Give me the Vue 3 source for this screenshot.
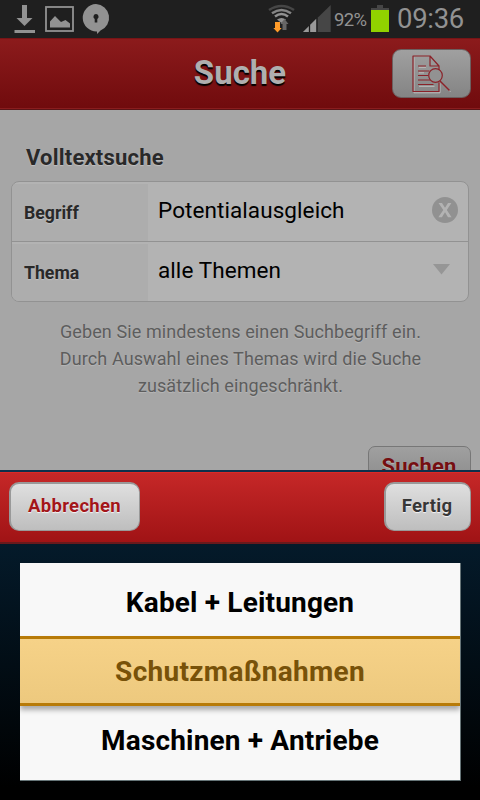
<script setup>
const hint = [
  'Geben Sie mindestens einen Suchbegriff ein.',
  'Durch Auswahl eines Themas wird die Suche',
  'zusätzlich eingeschränkt.',
]
const topics = ['Kabel + Leitungen', 'Schutzmaßnahmen', 'Maschinen + Antriebe']
</script>

<template>
  <div class="phone">
    <div class="status">
      <svg class="status-left" width="120" height="38" viewBox="0 0 120 38">
        <g fill="#929292">
          <path d="M22 5h5v13h5.500L24.500 26 16.500 18H22z" />
          <path d="M14.500 30h20.500v3H14.500z" />
          <path d="M50 27.500v-6l5-5.500 6 6 4.500-2 4.500 3.500v4z" />
          <path d="M96 4a13.700 13.700 0 0 1 4.500 26.400L97 34v-2.500a13.700 13.700 0 0 1-1-27.500z" />
        </g>
        <rect x="46" y="7" width="27" height="24" fill="none" stroke="#929292" stroke-width="1.800" />
        <path d="M96 14a2.700 2.700 0 0 1 1.300 5v3.500h-2.600V19A2.700 2.700 0 0 1 96 14z" fill="#1f1f1f" />
      </svg>
      <div class="status-right">
        <svg width="64" height="38" viewBox="267 0 64 38">
          <g fill="none" stroke-width="2.600">
            <path d="M269 10q12.500-8 25 0" stroke="#464646" />
            <path d="M272 13.300q9.500-6.500 19 0" stroke="#858585" />
            <path d="M275 16.500q6.500-5 13 0" stroke="#929292" />
          </g>
          <path d="M277 19.500q4.500-3 9 0l-4.500 3.500z" fill="#929292" />
          <path d="M275 22h5v6h1.700L277.500 32.500 273.300 28H275z" fill="#ff9b29" />
          <path d="M282.500 30v-6h-2l4-5 4 5h-2v6z" fill="#666" />
          <path d="M303 32L330.700 5v27z" fill="#464646" />
          <path d="M303 32L316.500 18.500V32z" fill="#999" />
          <path d="M309.500 25v7M317 18v14" stroke="#1b1b1b" stroke-width="1.300" />
        </svg>
        <span class="percent">92%</span>
        <svg class="battery" width="19" height="38" viewBox="0 0 19 38">
          <path d="M6 5h6v3h6v3H0V8h6z" fill="#464646" />
          <path d="M0 10h18v22H0z" fill="#91d100" />
        </svg>
        <span class="clock">09:36</span>
      </div>
    </div>

    <header class="header">
      <h1>Suche</h1>
      <button class="doc-button" aria-label="Dokument">
        <svg width="42" height="42" viewBox="0 0 42 42" fill="none" stroke-linejoin="round">
          <g transform="translate(1 1.300)" stroke="#bdbdbd" stroke-width="1">
            <path d="M30 28v9.500H4V2M9 31h15.500M9 17.500h5M9 12h7M31 27l9.500 9.500" />
          </g>
          <g stroke="#8b2229" stroke-width="1.200">
            <path d="M30 28.500V37.500H4V2h17l9 10v4M21 2v10h9" />
            <path d="M9 12h8M9 17h11.500M9 21.500h10M9 26h12M9 30.500h15.500" />
            <circle cx="26.500" cy="21.500" r="6.800" fill="#929292" />
            <path d="M31 27l9.500 9.500" stroke-width="1.500" />
          </g>
        </svg>
      </button>
    </header>

    <main class="content">
      <h2>Volltextsuche</h2>
      <div class="form">
        <div class="field">
          <label>Begriff</label>
          <span class="value term">Potentialausgleich</span>
          <svg class="clear" width="26" height="26" viewBox="0 0 26 26">
            <circle cx="13" cy="13" r="13" fill="#919191" />
            <path d="M6.500 6H10l3 4.700L16 6h3.400l-4.600 7 4.800 7.200H16l-3-4.900-3.100 4.900H6.300l5-7.200z" fill="#b3b3b3" />
          </svg>
        </div>
        <div class="field">
          <label class="thema">Thema</label>
          <span class="value topic">alle Themen</span>
          <svg class="arrow" width="17" height="11" viewBox="0 0 17 11"><path d="M0 0h17L8.500 10.500z" fill="#969696" /></svg>
        </div>
      </div>
      <div class="hint"><p v-for="line in hint" :key="line">{{ line }}</p></div>
      <button class="search">Suchen</button>
    </main>

    <section class="sheet">
      <div class="toolbar">
        <button class="cancel">Abbrechen</button>
        <button class="done">Fertig</button>
      </div>
      <div class="picker">
        <div class="wheel">
          <div v-for="(topic, i) in topics" :key="topic" class="option" :class="{ selected: i === 1 }"><span>{{ topic }}</span></div>
        </div>
      </div>
    </section>
  </div>
</template>

<style>
body { margin: 0; overflow: hidden; }
</style>

<style scoped>
* { box-sizing: border-box; }
h1, h2, p { margin: 0; }
button { font-family: inherit; padding: 0; display: flex; align-items: center; justify-content: center; white-space: nowrap; }
svg { display: block; flex: none; }
.phone { width: 480px; height: 800px; display: flex; flex-direction: column; overflow: hidden; font-family: Roboto, sans-serif; white-space: nowrap; }
.status { height: 38px; flex: none; display: flex; justify-content: space-between; background: #1f1f1f; color: #929292; }
.status-right { display: flex; width: 213px; }
.percent { width: 37px; padding-left: 3px; font-size: 18.5px; line-height: 40px; letter-spacing: -.6px; }
.battery { margin-left: 3px; }
.clock { padding-left: 7px; font-size: 27.5px; line-height: 38px; letter-spacing: -.3px; }
.header { height: 72px; flex: none; display: grid; grid-template-columns: 1fr auto 1fr; align-items: center; background: linear-gradient(#8c1b1c, #700b0d); border-bottom: 1px solid #5a1416; box-shadow: inset 0 1px #771416, inset 0 -1px #891d1e; }
h1 { grid-column: 2; font-size: 33px; line-height: 40px; color: #afafaf; text-shadow: 0 2px 1px #000; padding-bottom: 1px; }
.doc-button { justify-self: end; width: 79px; height: 49px; margin: 0 9px 1px 0; padding: 3px 4px 0 0; border: 1px solid #6c5f5f; border-radius: 9px; background: linear-gradient(#a0a0a0, #848484); }
.content { height: 360px; flex: none; display: flex; flex-direction: column; overflow: hidden; background: #a6a6a6; padding: 33px 9px 0 11px; }
h2 { height: 38px; flex: none; padding-left: 15px; font-size: 22px; line-height: 29px; letter-spacing: .2px; color: #292929; text-shadow: 0 1px 1px #c0c0c0; }
.form { width: 458px; height: 121px; flex: none; border: 1px solid #929292; border-radius: 8px; background: #b3b3b3; overflow: hidden; }
.field { height: 59px; display: flex; align-items: center; padding-top: 2px; }
.field + .field { height: 60px; border-top: 1px solid #929292; }
label { width: 136px; align-self: stretch; padding-left: 12px; font-size: 17.7px; line-height: 58px; font-weight: 700; color: #292929; background: #adadad; text-shadow: 0 1px 1px #c0c0c0; }
.value { width: 284px; padding-left: 10px; font-size: 22.5px; line-height: 30px; color: #000; padding-bottom: 5px; letter-spacing: .08px; }
.clear { margin-bottom: 5px; }
.arrow { margin: 0 0 6px 1px; }
.hint { padding: 16px 1px 0 0; text-align: center; font-size: 18px; line-height: 27px; letter-spacing: .1px; color: #5d5d5d; text-shadow: 0 1px 1px #b8b8b8; }
.search { flex: none; align-self: flex-end; width: 103px; height: 49px; margin-top: 47px; padding: 0 1px 9px 0; border: 1px solid #777; border-radius: 7px; background: linear-gradient(#a0a0a0, #848484); color: #750e11; font-size: 22px; font-weight: 700; letter-spacing: .2px; text-shadow: 0 1px 1px #bbb; }
.sheet { height: 330px; flex: none; display: flex; flex-direction: column; }
.toolbar { height: 74px; display: flex; justify-content: space-between; padding: 10px 9px 0; border-top: 2px solid #0c304b; border-bottom: 2px solid #69191c; background: linear-gradient(#c62828, #a01315); box-shadow: inset 0 1px #dc2927; }
.toolbar button { height: 49px; border: 1px solid #999; border-top-width: 2px; border-left-width: 2px; border-radius: 10px; background: linear-gradient(#dfdfdf, #bebebe); font-size: 18.5px; font-weight: 700; padding-bottom: 2px; text-shadow: 0 1px 1px #f5f5f5; letter-spacing: .3px; }
.toolbar .cancel { width: 131px; padding-right: 1px; color: #a31519; }
.toolbar .done { width: 87px; padding-right: 2px; color: #373737; }
.picker { height: 256px; padding: 19px 19px 19px 20px; background: linear-gradient(#041a2a, #000 95%); }
.wheel { width: 441px; height: 218px; padding-top: 5px; background: #f8f8f8; border: 0 solid #667477; border-right-width: 1px; border-bottom-width: 1px; overflow: hidden; }
.option { height: 69px; display: flex; align-items: center; justify-content: center; font-size: 28px; font-weight: 700; letter-spacing: .17px; color: #000; }
.selected { height: 70px; margin: -1px 0 0; padding-top: 1px; letter-spacing: .3px; border: solid #b87b08; border-width: 3px 0; background: linear-gradient(#f6d288, #edc97e); color: #785209; box-shadow: 0 4px 5px #aaa; position: relative; }
</style>
